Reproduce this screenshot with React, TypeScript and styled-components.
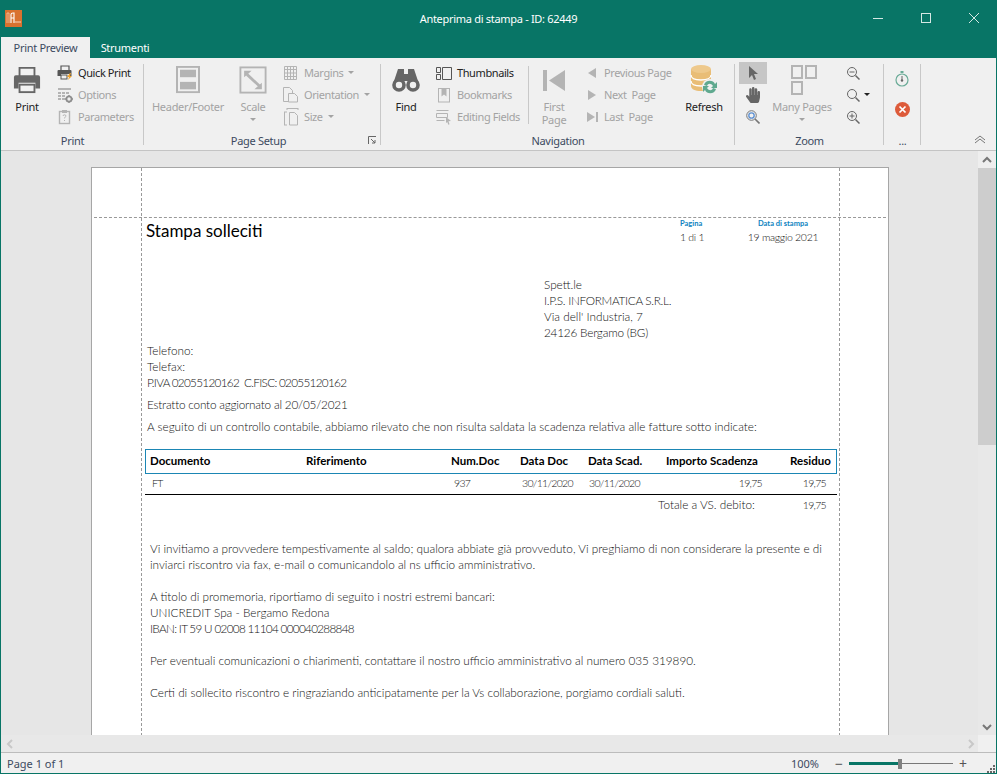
import styled, { createGlobalStyle } from 'styled-components';
import { FaHandPaper } from 'react-icons/fa';

const Global = createGlobalStyle`
  html, body {
    margin: 0;
    padding: 0;
    height: 100%;
    overflow: hidden;
  }
  body {
    font-family: 'Noto Sans', 'Liberation Sans', sans-serif;
    font-size: 11px;
    letter-spacing: -0.3px;
    color: #333;
  }
`;

const TEAL = '#087566';
const MUTED = '#a3a3a3';
const ICON = '#666666';
const DIM = '#b4b4b4';

/* ---------- icons ---------- */

const AppLogo = () => (
  <svg width="17" height="17" viewBox="0 0 17 17">
    <rect width="17" height="17" fill="#d9712f" />
    <path d="M2 3v10M4 3v10M2 3h2" stroke="#f3c9a8" strokeWidth="0.8" fill="none" />
    <path d="M6 13V4.5C6 3 8 3 8 3h1v10M6 8h3" stroke="#fff" strokeWidth="1.1" fill="none" />
    <path d="M10 12h6" stroke="#eeb088" strokeWidth="1.6" />
  </svg>
);

const PrinterLarge = () => (
  <svg width="28" height="28" viewBox="0 0 30 30">
    <path d="M7 11V2h16v9" fill="none" stroke={ICON} strokeWidth="2" />
    <path d="M3 10h24a2 2 0 0 1 2 2v12h-5v-6H6v6H1V12a2 2 0 0 1 2-2z" fill={ICON} />
    <rect x="7" y="20" width="16" height="8" fill="none" stroke={ICON} strokeWidth="2" />
  </svg>
);

const QuickPrintIcon = () => (
  <svg width="16" height="16" viewBox="0 0 16 16">
    <path d="M4 5V1h8v4" fill="none" stroke="#555" strokeWidth="1.2" />
    <path d="M1.5 5h12a1 1 0 0 1 1 1v5H12V9H4v2H.5V6a1 1 0 0 1 1-1z" fill="#555" />
    <rect x="4" y="10" width="6" height="4" fill="none" stroke="#555" />
    <path d="M13 8l-3 4h2l-1 3 4-4h-2l1-3z" fill="#eda22e" />
  </svg>
);

const OptionsIcon = () => (
  <svg width="16" height="16" viewBox="0 0 16 16">
    <rect x="1" y="1" width="13" height="2" fill={DIM} />
    <path d="M1 5h3v2H1zM5 5h3v2H5zM9 5h3v2H9zM1 8h3v2H1zM5 8h3v2H5zM1 11h3v2H1zM5 11h3v2H5z" fill={DIM} />
    <circle cx="12" cy="12" r="2.6" fill="none" stroke="#8e8e8e" strokeWidth="1.8" />
    <path d="M12 8v1.5M12 14.5V16M8 12h1.5M14.5 12H16" stroke="#8e8e8e" strokeWidth="1.4" />
  </svg>
);

const ParametersIcon = () => (
  <svg width="16" height="16" viewBox="0 0 16 16">
    <rect x="2.5" y="2.5" width="10" height="12" fill="none" stroke={DIM} strokeWidth="1.4" />
    <rect x="5" y="1" width="5" height="3" fill={DIM} />
    <path d="M6 7c0-1.6 3-1.6 3 0 0 1-1.5 1-1.5 2.4M7.5 11v1" fill="none" stroke={DIM} />
  </svg>
);

const HeaderFooterIcon = () => (
  <svg width="24" height="28" viewBox="0 0 24 30" preserveAspectRatio="none">
    <rect x="1" y="1" width="22" height="27" fill="none" stroke={DIM} strokeWidth="2" />
    <rect x="4" y="4" width="16" height="8" fill={DIM} />
    <rect x="4" y="17" width="16" height="8" fill={DIM} />
  </svg>
);

const ScaleIcon = () => (
  <svg width="28" height="28" viewBox="0 0 29 30">
    <rect x="1" y="1.5" width="27" height="27" fill="none" stroke={DIM} strokeWidth="2" />
    <path d="M8 9l14 13" stroke={DIM} strokeWidth="3" />
    <path d="M5 5h8l-8 7zM24 25h-8l8-7z" fill={DIM} />
  </svg>
);

const MarginsIcon = () => (
  <svg width="14" height="16" viewBox="0 0 14 16">
    <path d="M.5 1.5h12v13H.5zM.5 4.5h12M.5 11.5h12M3.5 1.5v13M9.500 1.500v13M6.500 1.500v13M.5 8h12" fill="none" stroke={DIM} />
  </svg>
);

const OrientationIcon = () => (
  <svg width="16" height="16" viewBox="0 0 16 16">
    <path d="M.5 .5h6l3 3v3M.5 .5v14h5" fill="none" stroke={DIM} />
    <path d="M5.500 6.500h6l3 3v5.500h-9z" fill="#f0f0f0" stroke={DIM} />
  </svg>
);

const SizeIcon = () => (
  <svg width="15" height="18" viewBox="0 0 15 18">
    <path d="M.5 4v13M0 4h3M0 17h3M3 .5h11M3 0v2M14 0v2" fill="none" stroke={DIM} />
    <path d="M5.500 4.500h5l3 3v9.500h-8z" fill="none" stroke={DIM} />
  </svg>
);

const BinocularsIcon = () => (
  <svg width="28" height="26" viewBox="0 0 28 26">
    <path d="M6 2h6v5h4V2h6l5 15H17v-3h-6v3H1z" fill={ICON} />
    <circle cx="7" cy="18" r="5" fill="#f0f0f0" stroke={ICON} strokeWidth="3.6" />
    <circle cx="21" cy="18" r="5" fill="#f0f0f0" stroke={ICON} strokeWidth="3.6" />
  </svg>
);

const ThumbnailsIcon = () => (
  <svg width="16" height="13" viewBox="0 0 16 13">
    <path d="M.5 .5h4v5h-4zM.5 7.500h4v5h-4zM6.500 .5h9v12h-9z" fill="none" stroke="#555" />
  </svg>
);

const BookmarksIcon = () => (
  <svg width="13" height="15" viewBox="0 0 13 15">
    <rect x=".5" y=".5" width="11" height="13.500" fill="none" stroke={DIM} />
    <path d="M3.500 .5h5v8L6 6.500l-2.500 2z" fill={DIM} />
  </svg>
);

const EditingFieldsIcon = () => (
  <svg width="16" height="15" viewBox="0 0 16 15">
    <path d="M.5 .5h12M.5 3.500h11v4H.5zM.5 10.500h8" fill="none" stroke={DIM} />
    <path d="M10 7l5 4-2.500 .3 1 3-1.200 .4-1-2.700L10 13z" fill={DIM} />
  </svg>
);

const FirstPageIcon = () => (
  <svg width="22" height="21" viewBox="0 0 22 21">
    <rect width="4" height="21" fill={DIM} />
    <path d="M6 10.500L22 0v21z" fill={DIM} />
  </svg>
);

const PrevIcon = () => (
  <svg width="8" height="10" viewBox="0 0 8 10"><path d="M0 5l8-5v10z" fill={DIM} /></svg>
);

const NextIcon = () => (
  <svg width="8" height="10" viewBox="0 0 8 10"><path d="M8 5L0 0v10z" fill={DIM} /></svg>
);

const LastIcon = () => (
  <svg width="11" height="10" viewBox="0 0 11 10">
    <path d="M8 5L0 0v10z" fill={DIM} />
    <rect x="9" width="2" height="10" fill={DIM} />
  </svg>
);

const RefreshIcon = () => (
  <svg width="28" height="30" viewBox="0 0 28 30">
    <path d="M1 4v17c0 3 4 5 10 5s10-2 10-5V4z" fill="#e9bd76" />
    <ellipse cx="11" cy="4" rx="10" ry="4" fill="#eec98c" />
    <path d="M1 10c0 3 4 5 10 5s10-2 10-5M1 16c0 3 4 5 10 5s10-2 10-5" fill="none" stroke="#fff" strokeWidth="1.3" />
    <circle cx="20" cy="22" r="8" fill="#f0f0f0" />
    <path d="M14 20c1-5 9-6 11-1l2-2v6h-6l2-2c-2-3-5-3-6 0z" fill="#5fa98f" />
    <path d="M26 24c-1 5-9 6-11 1l-2 2v-6h6l-2 2c2 3 5 3 6 0z" fill="#5fa98f" />
  </svg>
);

const PointerIcon = () => (
  <svg width="10" height="14" viewBox="0 0 10 14">
    <path d="M1 0l9 8H6l2 5-2 1-2-5-3 3z" fill={ICON} />
  </svg>
);

const TargetZoomIcon = () => (
  <svg width="14" height="14" viewBox="0 0 14 14">
    <circle cx="5.500" cy="5.500" r="4.800" fill="none" stroke="#777" />
    <circle cx="5.500" cy="5.500" r="2.700" fill="none" stroke="#5b8fd2" strokeWidth="1.300" />
    <path d="M9 9l4.500 4.500" stroke="#777" strokeWidth="1.600" />
  </svg>
);

const ManyPagesIcon = () => (
  <svg width="30" height="30" viewBox="-4 0 30 30">
    <path d="M1 1h10v12H1zM15 1h10v12H15zM1 17h10v12H1z" fill="none" stroke={DIM} strokeWidth="2" />
  </svg>
);

const ZoomIcon = ({ sign }: { sign?: 'in' | 'out' }) => (
  <svg width="13" height="13" viewBox="0 0 13 13">
    <circle cx="5" cy="5" r="4.500" fill="none" stroke="#666" />
    {sign && <path d="M2.500 5h5" stroke="#666" />}
    {sign === 'in' && <path d="M5 2.500v5" stroke="#666" />}
    <path d="M8.500 8.500l4 4" stroke="#666" strokeWidth="1.500" />
  </svg>
);

const TimerIcon = () => (
  <svg width="14" height="16" viewBox="0 0 14 16">
    <circle cx="7" cy="9" r="6" fill="none" stroke="#6aab97" strokeWidth="1.200" />
    <rect x="5.500" y="0" width="3" height="2" fill="#6aab97" />
    <path d="M7 5v4" stroke="#666" />
    <circle cx="7" cy="9.500" r="1.200" fill="#666" />
  </svg>
);

const CancelIcon = () => (
  <svg width="15" height="15" viewBox="0 0 15 15">
    <circle cx="7.500" cy="7.500" r="7.500" fill="#dd5b3a" />
    <path d="M4.500 4.500l6 6M10.500 4.500l-6 6" stroke="#fff" strokeWidth="1.700" />
  </svg>
);

const Chevron = ({ d, color }: { d: string; color: string }) => (
  <svg width="10" height="10" viewBox="0 0 10 10">
    <path d={d} fill="none" stroke={color} strokeWidth="2" />
  </svg>
);

/* ---------- page ---------- */

export default function App() {
  return (
    <Window>
      <Global />
      <TitleBar>
        <AppLogo />
        <Title>Anteprima di stampa - ID: 62449</Title>
        <WindowButtons>
          <svg width="10" height="10" viewBox="0 0 10 10"><path d="M0 5.500h10" stroke="#d5e8e4" /></svg>
          <svg width="10" height="10" viewBox="0 0 10 10"><rect x=".5" y=".5" width="9" height="9" fill="none" stroke="#d5e8e4" /></svg>
          <svg width="10" height="10" viewBox="0 0 10 10"><path d="M0 0l10 10M10 0L0 10" stroke="#d5e8e4" /></svg>
        </WindowButtons>
      </TitleBar>

      <Tabs>
        <Tab $active>Print Preview</Tab>
        <Tab>Strumenti</Tab>
      </Tabs>

      <Ribbon>
        <Group $width={143} label="Print">
          <Large $width={52}><IconBox><PrinterLarge /></IconBox><LargeText>Print</LargeText></Large>
          <SmallColumn $left={4}>
            <Small><SmallIcon><QuickPrintIcon /></SmallIcon><SmallText>Quick Print</SmallText></Small>
            <Small $disabled><SmallIcon><OptionsIcon /></SmallIcon><SmallText>Options</SmallText></Small>
            <Small $disabled><SmallIcon><ParametersIcon /></SmallIcon><SmallText>Parameters</SmallText></Small>
          </SmallColumn>
        </Group>

        <Group $width={237} label="Page Setup" launcher>
          <Large $width={80} $left={4} $disabled><IconBox><HeaderFooterIcon /></IconBox><LargeText>Header/Footer</LargeText></Large>
          <Large $width={50} $disabled><IconBox><ScaleIcon /></IconBox><LargeText>Scale</LargeText><Caret /></Large>
          <SmallColumn $left={5}>
            <Small $disabled><SmallIcon><MarginsIcon /></SmallIcon><SmallText>Margins</SmallText><Caret /></Small>
            <Small $disabled><SmallIcon><OrientationIcon /></SmallIcon><SmallText>Orientation</SmallText><Caret /></Small>
            <Small $disabled><SmallIcon><SizeIcon /></SmallIcon><SmallText>Size</SmallText><Caret /></Small>
          </SmallColumn>
        </Group>

        <Group $width={354} label="Navigation">
          <Large $width={50}><IconBox><BinocularsIcon /></IconBox><LargeText>Find</LargeText></Large>
          <SmallColumn $left={5} $width={92}>
            <Small><SmallIcon><ThumbnailsIcon /></SmallIcon><SmallText>Thumbnails</SmallText></Small>
            <Small $disabled><SmallIcon><BookmarksIcon /></SmallIcon><SmallText>Bookmarks</SmallText></Small>
            <Small $disabled><SmallIcon><EditingFieldsIcon /></SmallIcon><SmallText>Editing Fields</SmallText></Small>
          </SmallColumn>
          <InnerSeparator />
          <Large $width={44} $disabled><IconBox><FirstPageIcon /></IconBox><LargeText>First<br />Page</LargeText></Large>
          <SmallColumn $left={8} $width={95}>
            <Small $disabled><SmallIcon><PrevIcon /></SmallIcon><SmallText $tight>Previous Page</SmallText></Small>
            <Small $disabled><SmallIcon><NextIcon /></SmallIcon><SmallText $tight>Next  Page</SmallText></Small>
            <Small $disabled><SmallIcon><LastIcon /></SmallIcon><SmallText $tight>Last  Page</SmallText></Small>
          </SmallColumn>
          <RefreshSlot>
            <Large $width={50}><IconBox><RefreshIcon /></IconBox><LargeText>Refresh</LargeText></Large>
          </RefreshSlot>
        </Group>

        <Group $width={149} label="Zoom">
          <ToolColumn>
            <Tool $active><PointerIcon /></Tool>
            <Tool><FaHandPaper size={16} color={ICON} /></Tool>
            <Tool><TargetZoomIcon /></Tool>
          </ToolColumn>
          <Large $width={70} $disabled><IconBox><ManyPagesIcon /></IconBox><LargeText>Many Pages</LargeText><Caret /></Large>
          <ZoomColumn>
            <Tool><ZoomIcon sign="out" /></Tool>
            <Tool><ZoomIcon /><DarkCaret /></Tool>
            <Tool><ZoomIcon sign="in" /></Tool>
          </ZoomColumn>
        </Group>

        <Group $width={37} label="...">
          <ExtraColumn>
            <TimerIcon />
            <CancelIcon />
          </ExtraColumn>
        </Group>

        <Collapse>
          <svg width="12" height="9" viewBox="0 0 12 9">
            <path d="M1 5l5-4 5 4M1 8l5-4 5 4" fill="none" stroke="#777" />
          </svg>
        </Collapse>
      </Ribbon>

      <Viewer>
        <Canvas>
          <Sheet>
            <GuideV $left={49} />
            <GuideV $left={747} />
            <GuideH />

            <DocHeader>
              <DocTitle>Stampa solleciti</DocTitle>
              <Meta $width={67}>
                <MetaLabel>Pagina</MetaLabel>
                <MetaValue>1 di 1</MetaValue>
              </Meta>
              <Meta $width={72} $center>
                <MetaLabel>Data di stampa</MetaLabel>
                <MetaValue>19 maggio 2021</MetaValue>
              </Meta>
            </DocHeader>

            <Address>
              <div>Spett.le</div>
              <Squeezed $spacing={-0.3}>I.P.S. INFORMATICA S.R.L.</Squeezed>
              <div>Via dell' Industria, 7</div>
              <Squeezed $spacing={-0.2}>24126 Bergamo (BG)</Squeezed>
            </Address>

            <Contacts>
              <div>Telefono:</div>
              <div>Telefax:</div>
              <Squeezed $spacing={-0.7}>P.IVA 02055120162&nbsp;&nbsp;C.FISC: 02055120162</Squeezed>
            </Contacts>

            <Note><Squeezed $spacing={-0.2}>Estratto conto aggiornato al 20/05/2021</Squeezed></Note>
            <Note>A seguito di un controllo contabile, abbiamo rilevato che non risulta saldata la scadenza relativa alle fatture sotto indicate:</Note>

            <DocTable>
              <HeadRow>
                <span>Documento</span>
                <span>Riferimento</span>
                <span>Num.Doc</span>
                <span>Data Doc</span>
                <span>Data Scad.</span>
                <span>Importo Scadenza</span>
                <span>Residuo</span>
              </HeadRow>
              <BodyRow>
                <span>FT</span>
                <span>937</span>
                <span>30/11/2020</span>
                <span>30/11/2020</span>
                <Amount>19,75</Amount>
                <Amount>19,75</Amount>
              </BodyRow>
              <TotalRow>
                <TotalLabel>Totale a VS. debito:</TotalLabel>
                <Amount>19,75</Amount>
              </TotalRow>
            </DocTable>

            <Letter>
              <p>Vi invitiamo a provvedere tempestivamente al saldo; qualora abbiate già provveduto, Vi preghiamo di non considerare la presente e di<br />inviarci riscontro via fax, e-mail o comunicandolo al ns ufficio amministrativo.</p>
              <p>A titolo di promemoria, riportiamo di seguito i nostri estremi bancari:<br />UNICREDIT Spa - Bergamo Redona<br /><Squeezed as="span" $spacing={-0.7}>IBAN: IT 59 U 02008 11104 000040288848</Squeezed></p>
              <p>Per eventuali comunicazioni o chiarimenti, contattare il nostro ufficio amministrativo al numero 035 319890.</p>
              <p>Certi di sollecito riscontro e ringraziando anticipatamente per la Vs collaborazione, porgiamo cordiali saluti.</p>
            </Letter>
          </Sheet>
        </Canvas>
        <VScroll>
          <ScrollButton><Chevron d="M1 7l4-4 4 4" color="#777" /></ScrollButton>
          <ScrollThumb />
          <ScrollTrack />
          <ScrollButton $plain><Chevron d="M1 3l4 4 4-4" color="#777" /></ScrollButton>
        </VScroll>
      </Viewer>

      <HScroll>
        <Chevron d="M7 1L3 5l4 4" color="#c8c8c8" />
        <HTrack />
        <Chevron d="M3 1l4 4-4 4" color="#c8c8c8" />
        <Corner />
      </HScroll>

      <StatusBar>
        <span>Page 1 of 1</span>
        <StatusRight>
          <Percent>100%</Percent>
          <SliderSign>−</SliderSign>
          <Slider>
            <SliderFill />
            <SliderThumb />
            <SliderRest />
          </Slider>
          <SliderSign>+</SliderSign>
          <Grip>
            <svg width="9" height="8" viewBox="0 0 9 8">
              <path d="M7 0h2v2H7zM4 3h2v2H4zM7 3h2v2H7zM1 6h2v2H1zM4 6h2v2H4zM7 6h2v2H7z" fill="#666" />
            </svg>
          </Grip>
        </StatusRight>
      </StatusBar>
    </Window>
  );
}

function Group({ $width, label, launcher, children }: { $width: number; label: string; launcher?: boolean; children: React.ReactNode }) {
  return (
    <GroupBox $width={$width}>
      <GroupBody>{children}</GroupBody>
      <GroupLabel $offset={launcher}>{label}</GroupLabel>
      {launcher && (
        <Launcher>
          <svg width="9" height="9" viewBox="0 0 9 9">
            <path d="M.5 8V.5H8M3 3l4 4M7 4v3H4" fill="none" stroke="#666" />
          </svg>
        </Launcher>
      )}
    </GroupBox>
  );
}

/* ---------- window ---------- */

const Window = styled.div`
  display: flex;
  flex-direction: column;

  width: 997px;
  height: 774px;

  background: #f0f0f0;

  border: 1px solid ${TEAL};
  border-top: 0;
  box-sizing: border-box;
  overflow: hidden;
`;

const TitleBar = styled.div`
  display: flex;
  align-items: center;
  flex: none;

  height: 37px;
  margin: 0 -1px;
  padding-left: 5px;

  background: ${TEAL};
`;

const Title = styled.div`
  flex: 1;

  padding-left: 102px;
  text-align: center;

  color: #fff;
  font-size: 11px;
`;

const WindowButtons = styled.div`
  display: flex;
  gap: 38px;

  width: 124px;
  margin-top: -1px;
`;

const Tabs = styled.div`
  display: flex;
  flex: none;

  height: 21px;
  margin: 0 -1px;
  padding-left: 1px;

  background: ${TEAL};
`;

const Tab = styled.div<{ $active?: boolean }>`
  display: flex;
  align-items: center;
  justify-content: center;

  width: ${p => (p.$active ? '89px' : '70px')};

  background: ${p => (p.$active ? '#f0f0f0' : 'transparent')};
  color: ${p => (p.$active ? '#3c4a60' : '#fff')};
`;

/* ---------- ribbon ---------- */

const Ribbon = styled.div`
  display: flex;
  flex: none;
  position: relative;

  height: 93px;
  padding-top: 4px;

  background: #f0f0f0;
  border-bottom: 1px solid #c4c4c4;
  box-sizing: border-box;
`;

const GroupBox = styled.div<{ $width: number }>`
  display: flex;
  flex-direction: column;
  flex: none;
  position: relative;

  width: ${p => p.$width}px;

  &::after {
    content: '';
    position: absolute;
    top: 2px;
    bottom: 5px;
    right: 0;
    width: 1px;
    background: #c8c8c8;
  }
`;

const GroupBody = styled.div`
  display: flex;
  height: 66px;
`;

const GroupLabel = styled.div<{ $offset?: boolean }>`
  margin-top: 4px;
  padding-right: ${p => (p.$offset ? '8px' : '0')};

  line-height: 18px;
  text-align: center;
  color: #3c4a60;
`;

const Launcher = styled.div`
  position: absolute;
  right: 4px;
  bottom: 5px;
  height: 9px;
  line-height: 0;
`;

const Large = styled.div<{ $width: number; $left?: number; $disabled?: boolean }>`
  display: flex;
  flex-direction: column;
  align-items: center;
  flex: none;

  width: ${p => p.$width}px;
  margin-left: ${p => p.$left ?? 0}px;
  padding-top: 2px;

  color: ${p => (p.$disabled ? MUTED : '#222')};
`;

const IconBox = styled.div`
  display: flex;
  align-items: center;
  justify-content: center;

  height: 32px;
`;

const LargeText = styled.div`
  margin-top: 4px;

  line-height: 13px;
  text-align: center;
  white-space: nowrap;
`;

const Caret = styled.i`
  display: inline-block;

  width: 0;
  height: 0;
  margin: 5px 0 0 0;

  border: 3px solid transparent;
  border-top: 3px solid ${MUTED};
  border-bottom: 0;
`;

const DarkCaret = styled(Caret)`
  position: absolute;
  left: 25px;
  top: 9px;
  margin: 0;

  border-top-color: #222;
`;

const SmallColumn = styled.div<{ $left: number; $width?: number }>`
  display: flex;
  flex-direction: column;
  flex: none;

  width: ${p => (p.$width ? `${p.$width}px` : 'auto')};
  margin-left: ${p => p.$left}px;
`;

const Small = styled.div<{ $disabled?: boolean }>`
  display: flex;
  align-items: center;

  height: 22px;
  padding-bottom: 2px;
  box-sizing: border-box;

  color: ${p => (p.$disabled ? MUTED : '#222')};
  letter-spacing: -0.4px;
  white-space: pre;

  ${Caret} {
    margin: 1px 0 0 5px;
  }
`;

const SmallIcon = styled.div`
  display: flex;
  align-items: center;
  justify-content: center;
  flex: none;

  width: 16px;
  margin-bottom: -2px;
`;

const SmallText = styled.span<{ $tight?: boolean }>`
  margin-left: ${p => (p.$tight ? '4px' : '5px')};
`;

const InnerSeparator = styled.div`
  flex: none;

  width: 1px;
  height: 58px;
  margin: 4px 3px 0 0;

  background: #c8c8c8;
`;

const RefreshSlot = styled.div`
  margin-left: auto;
  margin-right: 6px;
`;

const ToolColumn = styled.div`
  display: flex;
  flex-direction: column;
  flex: none;

  width: 28px;
  margin-left: 4px;
`;

const ZoomColumn = styled(ToolColumn)`
  margin-left: 2px;
`;

const Tool = styled.div<{ $active?: boolean }>`
  display: flex;
  align-items: center;
  justify-content: center;
  position: relative;

  height: 22px;

  background: ${p => (p.$active ? '#c6c6c6' : 'transparent')};
`;

const ExtraColumn = styled.div`
  display: flex;
  flex-direction: column;
  align-items: center;
  gap: 15px;

  width: 36px;
  padding-top: 9px;
  box-sizing: border-box;
`;

const Collapse = styled.div`
  position: absolute;
  right: 10px;
  bottom: 6px;
  line-height: 0;
`;

/* ---------- viewer ---------- */

const Viewer = styled.div`
  display: flex;
  flex: none;

  height: 584px;
`;

const Canvas = styled.div`
  flex: 1;

  padding: 16px 0 0 90px;

  background: #e6e6e6;
  overflow: hidden;
`;

const Sheet = styled.div`
  position: relative;

  width: 798px;
  height: 640px;
  padding: 50px 50px 0 54px;

  background: #fff;
  border: 1px solid #a6a6a6;
  box-sizing: border-box;

  font-family: 'Lato', 'Liberation Sans', sans-serif;
  font-size: 11.75px;
  font-weight: 300;
  letter-spacing: 0;
  line-height: 16px;
  color: #111;
`;

const Squeezed = styled.div<{ $spacing: number }>`
  letter-spacing: ${p => p.$spacing}px;
`;

const GuideV = styled.div<{ $left: number }>`
  position: absolute;
  top: 0;
  bottom: 0;
  left: ${p => p.$left}px;

  border-left: 1px dashed #999;
`;

const GuideH = styled.div`
  position: absolute;
  top: 49px;
  left: 2px;
  right: 2px;

  border-top: 1px dashed #999;
`;

const DocHeader = styled.div`
  display: flex;

  height: 26px;
  margin-right: 19px;
`;

const DocTitle = styled.div`
  flex: 1;

  font-size: 17px;
  font-weight: 400;
  line-height: 25px;
  color: #000;
`;

const Meta = styled.div<{ $width: number; $center?: boolean }>`
  width: ${p => p.$width}px;

  text-align: ${p => (p.$center ? 'center' : 'left')};
`;

const MetaLabel = styled.div`
  height: 12px;

  font-size: 7.5px;
  font-weight: 700;
  line-height: 12px;
  color: #0c82c0;
  white-space: nowrap;
`;

const MetaValue = styled.div`
  font-size: 10.5px;
  letter-spacing: -0.3px;
  line-height: 14px;
  white-space: nowrap;
`;

const Address = styled.div`
  margin: 33px 0 0 398px;
`;

const Contacts = styled.div`
  margin: 2px 0 0 1px;
`;

const Note = styled.div`
  margin: 6px 0 0 1px;
  white-space: nowrap;
`;

const DocTable = styled.div`
  width: 692px;
  margin: 14px 0 0 -1px;
`;

const HeadRow = styled.div`
  display: grid;
  grid-template-columns: 156px 145px 69px 68px 78px 124px 1fr;
  align-items: center;

  height: 25px;
  padding: 0 0 2px 4px;

  border: 1px solid #1b86b4;
  box-sizing: border-box;

  font-size: 11.5px;
  font-weight: 700;
  color: #000;
  white-space: nowrap;
`;

const BodyRow = styled.div`
  display: grid;
  grid-template-columns: 302px 68px 67px 67px 106px 64px;
  align-items: center;

  height: 21px;
  padding: 0 0 2px 7px;

  border-bottom: 1px solid #000;
  box-sizing: border-box;

  font-size: 10.5px;
  letter-spacing: -0.7px;
`;

const Amount = styled.span`
  text-align: right;
  font-size: 10.5px;
  letter-spacing: -0.7px;
`;

const TotalRow = styled.div`
  display: flex;
  justify-content: flex-end;
  gap: 48px;

  height: 21px;
  padding-right: 11px;
  line-height: 20px;
`;

const TotalLabel = styled.span`
  font-size: 11.75px;
`;

const Letter = styled.div`
  margin: 25px 0 0 4px;

  white-space: nowrap;

  p {
    margin: 0 0 16px;
  }
`;

/* ---------- scrollbars ---------- */

const VScroll = styled.div`
  display: flex;
  flex-direction: column;
  flex: none;

  width: 18px;

  background: #e8e8e8;
`;

const ScrollButton = styled.div<{ $plain?: boolean }>`
  display: flex;
  align-items: center;
  justify-content: center;
  flex: none;

  height: 17px;

  background: ${p => (p.$plain ? '#e8e8e8' : '#eeeeee')};
`;

const ScrollThumb = styled.div`
  flex: none;

  height: 277px;

  background: #cdcdcd;
`;

const ScrollTrack = styled.div`
  flex: 1;
`;

const HScroll = styled.div`
  display: flex;
  align-items: center;
  flex: none;

  height: 18px;
  padding-left: 4px;

  background: #e8e8e8;
  border-bottom: 1px solid #bcbcbc;
  box-sizing: border-box;
`;

const HTrack = styled.div`
  flex: 1;
`;

const Corner = styled.div`
  align-self: stretch;

  width: 18px;
  margin-left: 2px;

  background: #f0f0f0;
`;

/* ---------- status bar ---------- */

const StatusBar = styled.div`
  display: flex;
  align-items: center;
  justify-content: space-between;
  flex: 1;

  padding-left: 6px;

  background: #f0f0f0;
  color: #3c4a60;
  letter-spacing: 0;
`;

const StatusRight = styled.div`
  display: flex;
  align-items: center;
`;

const Percent = styled.span`
  margin-right: 16px;
`;

const SliderSign = styled.span`
  width: 7px;

  font-size: 14px;
  line-height: 14px;
  text-align: center;
  color: #555;
`;

const Slider = styled.div`
  display: flex;
  align-items: center;

  width: 104px;
  margin: 0 6px 0 7px;
`;

const SliderFill = styled.div`
  width: 49px;
  height: 3px;

  background: ${TEAL};
`;

const SliderThumb = styled.div`
  flex: none;

  width: 4px;
  height: 10px;

  background: #808080;
`;

const SliderRest = styled.div`
  flex: 1;

  height: 1px;

  background: #777;
`;

const Grip = styled.div`
  display: flex;
  align-items: flex-end;
  align-self: flex-end;

  height: 20px;
  margin-left: 20px;
  padding: 0 1px 1px 0;
  line-height: 0;
`;
